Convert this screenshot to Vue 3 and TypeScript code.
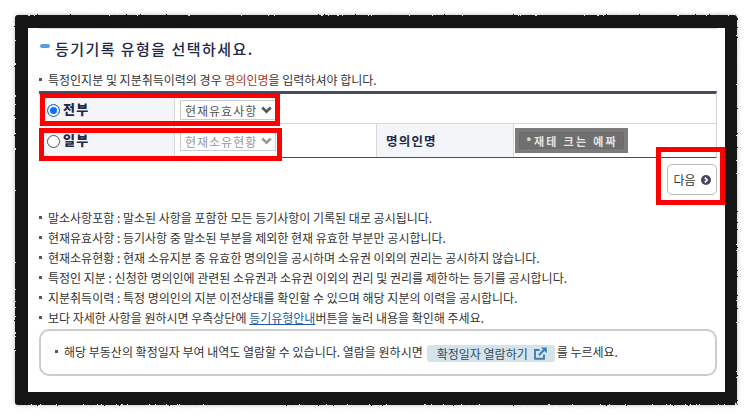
<script setup lang="ts">
const notes: string[] = [
  '말소사항포함 : 말소된 사항을 포함한 모든 등기사항이 기록된 대로 공시됩니다.',
  '현재유효사항 : 등기사항 중 말소된 부분을 제외한 현재 유효한 부분만 공시합니다.',
  '현재소유현황 : 현재 소유지분 중 유효한 명의인을 공시하며 소유권 이외의 권리는 공시하지 않습니다.',
  '특정인 지분 : 신청한 명의인에 관련된 소유권과 소유권 이외의 권리 및 권리를 제한하는 등기를 공시합니다.',
  '지분취득이력 : 특정 명의인의 지분 이전상태를 확인할 수 있으며 해당 지분의 이력을 공시합니다.',
]
</script>

<template>
  <div class="page">
    <svg class="defs" width="0" height="0" aria-hidden="true">
      <filter id="rough" x="-2%" y="-2%" width="104%" height="104%">
        <feTurbulence type="fractalNoise" baseFrequency="0.45" numOctaves="2" seed="4" />
        <feDisplacementMap in="SourceGraphic" scale="2.4" />
      </filter>
    </svg>
    <div class="frame">
      <div class="content">
        <h2 class="title"><span class="pill"></span>등기기록 유형을 선택하세요.</h2>
        <p class="note line"><i class="dot"></i><span>특정인지분 및 지분취득이력의 경우 <b class="red">명의인명</b>을 입력하셔야 합니다.</span></p>
        <div class="table">
          <div class="row first">
            <div class="head radio-head">
              <span class="radio on"></span><strong>전부</strong>
            </div>
            <div class="cell">
              <div class="select">현재유효사항
                <svg width="11" height="8" viewBox="0 0 11 8"><path d="M1.2 1.5 5.5 5.6 9.8 1.5" fill="none" stroke="#555" stroke-width="2.6"/></svg>
              </div>
            </div>
          </div>
          <div class="row second">
            <div class="head radio-head">
              <span class="radio"></span><strong>일부</strong>
            </div>
            <div class="cell">
              <div class="select off">현재소유현황
                <svg width="11" height="8" viewBox="0 0 11 8"><path d="M1.2 1.5 5.5 5.6 9.8 1.5" fill="none" stroke="#999" stroke-width="2.6"/></svg>
              </div>
            </div>
            <div class="head name-head">명의인명</div>
            <div class="cell name-cell">
              <div class="masked"><span>*재테 크는 예짜</span></div>
            </div>
          </div>
        </div>
        <div class="actions">
          <button class="next" type="button">다음
            <svg width="10" height="10" viewBox="0 0 10 10"><circle cx="5" cy="5" r="5" fill="#45465f"/><path d="M3.8 2.6 6.2 5 3.8 7.4" fill="none" stroke="#fff" stroke-width="1.6"/></svg>
          </button>
        </div>
        <ul class="list">
          <li v-for="n in notes" :key="n" class="line"><i class="dot"></i><span>{{ n }}</span></li>
          <li class="line"><i class="dot"></i><span>보다 자세한 사항을 원하시면 우측상단에 <a class="link">등기유형안내</a>버튼을 눌러 내용을 확인해 주세요.</span></li>
        </ul>
        <div class="notice">
          <i class="dot"></i><span>해당 부동산의 확정일자 부여 내역도 열람할 수 있습니다. 열람을 원하시면</span>
          <span class="chip">확정일자 열람하기
            <svg width="13" height="13" viewBox="0 0 13 13"><path d="M10 7.5V11.8H1V3H5.5" fill="none" stroke="#3f7db3" stroke-width="1.9"/><path d="M4.8 8.2 10.5 2.5" stroke="#3f7db3" stroke-width="2.1"/><path d="M7 .4H12.8V6.2Z" fill="#3f7db3"/></svg>
          </span>
          <span>를 누르세요.</span>
        </div>
      </div>
    </div>
    <div class="mark m1"></div>
    <div class="mark m2"></div>
    <div class="mark m3"></div>
  </div>
</template>

<style>
html, body { margin: 0; background: #fff; }
</style>

<style scoped>
.page {
  position: relative;
  width: 753px;
  height: 420px;
  overflow: hidden;
  padding: 15px 16px 15px 15px;
  box-sizing: border-box;
  font-family: "Noto Sans CJK KR", "Noto Sans", sans-serif;
  color: #333;
}
.defs { position: absolute; }
.frame {
  position: relative;
  box-sizing: border-box;
  height: 390px;
  padding: 13px 12px 13px 13px;
}
.frame::before {
  content: "";
  position: absolute;
  inset: 0;
  border-radius: 3px;
  background: #151515;
  box-shadow: 0 0 4px rgba(0, 0, 0, .28);
  filter: url(#rough);
}
.content {
  position: relative;
  box-sizing: border-box;
  height: 364px;
  padding: 0 8px 0 11px;
  background: #fff;
}
.content::before {
  content: "";
  display: block;
  height: 1px;
  background: #ddd;
}
.title {
  display: flex;
  align-items: center;
  margin: 0;
  height: 44px;
  padding-bottom: 5px;
  box-sizing: border-box;
  font-size: 15px;
  font-weight: 500;
  letter-spacing: 1.45px;
  color: #23284a;
}
.pill {
  width: 10px;
  height: 4px;
  margin: 0 5px 5px 1px;
  border-radius: 3px;
  background: #5b9fd8;
}
.line {
  display: flex;
  align-items: center;
  font-size: 12px;
  letter-spacing: 0;
  white-space: nowrap;
}
.note {
  box-sizing: border-box;
  margin: 0;
  height: 18px;
  padding-bottom: 5px;
}
.dot {
  flex: none;
  width: 3px;
  height: 3px;
  margin-right: 6px;
  background: #555;
}
.red { font-weight: 400; color: #a8342a; }
.table {
  box-sizing: border-box;
  height: 67px;
  border-top: 3px solid #4b4c63;
  border-bottom: 1px solid #4b4c63;
  border-right: 1px solid #d4d4d4;
}
.row { display: flex; box-sizing: border-box; }
.first { height: 30px; border-bottom: 1px solid #d8d8d8; }
.second { height: 33px; }
.head {
  box-sizing: border-box;
  background: #f4f5f8;
  border-right: 1px solid #d8d8d8;
  font-size: 13px;
  font-weight: 700;
  color: #23284a;
}
.radio-head {
  display: flex;
  align-items: center;
  width: 136px;
  padding-left: 8px;
}
.radio-head strong { letter-spacing: 1.2px; margin-left: 1px; }
.first .radio { margin-top: 4px; }
.second .radio { margin-top: 2px; }
.second strong { margin-top: -2px; }
.radio {
  box-sizing: border-box;
  width: 13px;
  height: 13px;
  margin-right: 2px;
  border-radius: 50%;
  border: 1px solid #555;
  background: #fff;
}
.radio.on {
  border: 1px solid #1a73e8;
  background: #0a6fff;
  box-shadow: inset 0 0 0 2px #fff;
}
.cell { display: flex; align-items: center; box-sizing: border-box; }
.first .cell { width: 202px; padding: 3px 0 0 5px; }
.second .cell:nth-child(2) { width: 202px; padding: 1px 0 0 5px; border-right: 1px solid #d8d8d8; }
.select {
  display: flex;
  align-items: center;
  justify-content: space-between;
  box-sizing: border-box;
  width: 96px;
  height: 20px;
  padding: 0 3px 0 4px;
  border: 1px solid #ccc;
  background: #fff;
  font-size: 12px;
  letter-spacing: 1px;
  color: #555;
}
.select.off { color: #999; }
.name-head {
  display: flex;
  align-items: center;
  width: 137px;
  padding: 0 0 1px 9px;
  letter-spacing: 1.2px;
  font-size: 12.5px;
}
.name-cell { flex: 1; padding-left: 1px; }
.masked {
  box-sizing: border-box;
  display: flex;
  align-items: center;
  width: 113px;
  height: 25px;
  border: 4px solid #7b7b7b;
  background: #6f6f6f;
  outline: 1px solid #6a6a6a;
  outline-offset: -5px;
  font-size: 11px;
  font-weight: 700;
  color: #e4e4e4;
  letter-spacing: 2.3px;
  padding-left: 7px;
  white-space: nowrap;
}
.actions { display: flex; justify-content: flex-end; padding-top: 6px; height: 31px; }
.next {
  display: flex;
  align-items: center;
  justify-content: center;
  gap: 5px;
  box-sizing: border-box;
  width: 50px;
  height: 31px;
  padding: 0;
  border: 1px solid #bbb;
  border-radius: 5px;
  background: #fff;
  font: 12px "Noto Sans CJK KR", sans-serif;
  color: #333;
}
.list { margin: 12px 0 0; padding: 0; list-style: none; }
.list .line { height: 20px; }
.link { color: #1d5aa8; text-decoration: underline; }
.notice {
  display: flex;
  align-items: center;
  box-sizing: border-box;
  height: 47px;
  margin-top: 2px;
  padding: 0 0 3px 14px;
  border: 2px solid #ccc;
  border-radius: 10px;
  font-size: 12px;
  letter-spacing: 0;
  white-space: nowrap;
}
.chip {
  display: flex;
  align-items: center;
  justify-content: space-between;
  box-sizing: border-box;
  width: 128px;
  height: 17px;
  margin: 4px 2px 0 4px;
  padding: 0 8px 0 10px;
  border-radius: 3px;
  background: #d5e3ea;
  color: #2e4a5c;
}
.mark {
  position: absolute;
  box-sizing: border-box;
  border: 5px solid #f00;
}
.m1 { left: 40px; top: 93px; width: 240px; height: 33px; }
.m2 { left: 39px; top: 128px; width: 243px; height: 33px; }
.m3 { left: 656px; top: 147px; width: 69px; height: 58px; }
</style>
